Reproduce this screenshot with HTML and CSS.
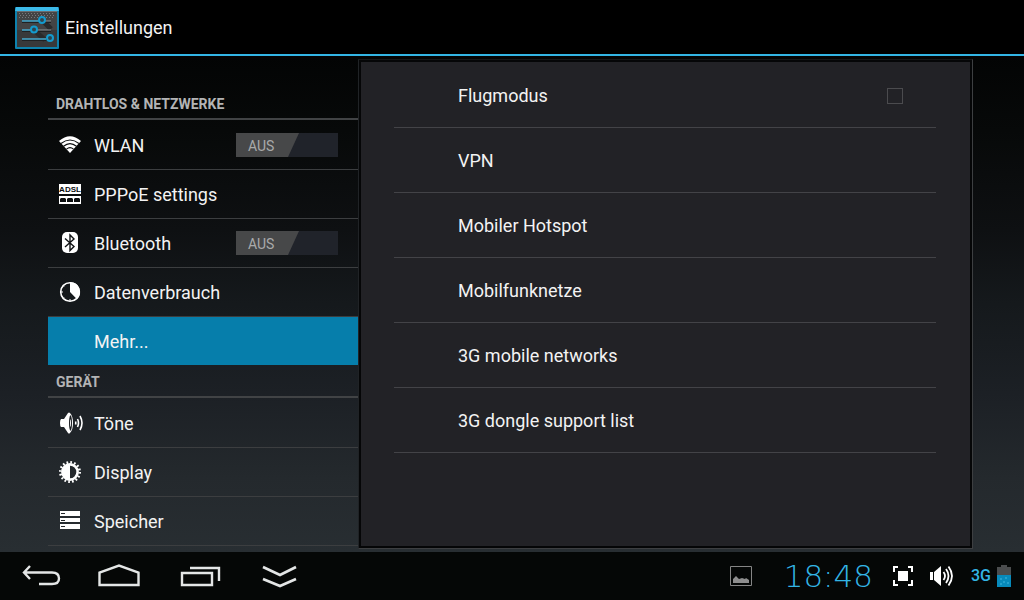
FILE: index.html
```html
<!DOCTYPE html>
<html lang="de">
<head>
<meta charset="utf-8">
<meta name="viewport" content="width=device-width, initial-scale=1">
<title>Einstellungen</title>
<link rel="stylesheet" href="styles.css">
</head>
<body>
<header class="app-bar">
  <svg class="app-icon" viewBox="0 0 44 42" aria-hidden="true">
    <rect width="44" height="42" rx="1" fill="#0d82ae"/>
    <path d="M1 0h42l1 4H0z" fill="#3cb9e8"/>
    <path d="M2 4h40v36H2z" fill="#434445"/>
    <path d="M2 23h40v17H2z" fill="#38393a"/>
    <path d="M2 4h40v1H2z" fill="#6c6e70"/>
    <path d="M4 6.500h36M5 8.500h35M4 10.500h36" stroke="#77797b" stroke-dasharray="1 2"/>
    <path d="M28 14l8 8M20 24l10 9" stroke="#292a2b" stroke-width="5"/>
    <path d="M7 15h29M7 24h29M7 33h25" stroke="#202122" stroke-width="2"/>
    <path d="M7 14h17M7 23h9M7 32h24" stroke="#45a9ce" stroke-width="1.5"/>
    <path d="M30 14h6M22 23h14" stroke="#8e9699"/>
    <g fill="#31444c" stroke="#149bce" stroke-width="2"><circle cx="27" cy="13" r="3"/><circle cx="19" cy="22.500" r="3"/><circle cx="35" cy="31" r="3"/></g>
  </svg>
  <h1 class="app-title">Einstellungen</h1>
</header>

<main class="content">
  <nav class="sidebar" aria-label="Kategorien">
    <h2 class="section-title">Drahtlos &amp; Netzwerke</h2>
    <ul class="menu">
      <li class="menu-row">
        <a class="menu-link" href="#wlan">
          <svg class="icon" viewBox="0 0 26 26" aria-hidden="true"><path d="M1 8Q12 -1.500 23 8L12 20z" fill="#fff"/><path d="M3 10.500Q12 3.500 21 10.500M5.500 13.300Q12 8 18.500 13.300M8.500 16.200Q12 13 15.500 16.200" fill="none" stroke="#0c0e0f" stroke-width="1.100"/></svg>
          <span id="wlan-label">WLAN</span>
        </a>
        <label class="switch"><input type="checkbox" role="switch" aria-labelledby="wlan-label"><span class="switch-thumb">AUS</span></label>
      </li>
      <li class="menu-row">
        <a class="menu-link" href="#pppoe">
          <svg class="icon" viewBox="0 0 26 26" aria-hidden="true"><path d="M1 2h22v20H1z" fill="#fff"/><text class="adsl" x="12" y="10" text-anchor="middle">ADSL</text><path d="M1 12h22v2H1zM2 20v-3l1-1h4l1 1v3zM9 20v-3l1-1h4l1 1v3zM16 20v-3l1-1h4l1 1v3z" fill="#0c0e0f"/></svg>
          <span>PPPoE settings</span>
        </a>
      </li>
      <li class="menu-row">
        <a class="menu-link" href="#bluetooth">
          <svg class="icon" viewBox="0 0 26 26" aria-hidden="true"><rect x="4" y="1" width="16" height="21" rx="5" fill="#fff"/><path d="M7 7.500l9 8-4 4V4l4 4-9 8" fill="none" stroke="#111315" stroke-width="1.400"/></svg>
          <span id="bt-label">Bluetooth</span>
        </a>
        <label class="switch"><input type="checkbox" role="switch" aria-labelledby="bt-label"><span class="switch-thumb">AUS</span></label>
      </li>
      <li class="menu-row">
        <a class="menu-link" href="#daten">
          <svg class="icon" viewBox="0 0 26 26" aria-hidden="true"><circle cx="12" cy="12" r="9.300" fill="none" stroke="#fff" stroke-width="1.600"/><path d="M12 2a10 10 0 0 1 7 17.200L12 12z" fill="#fff"/><path d="M3 12h2M12 19v2M5 5.500l1 1M5 18.500l1-1" stroke="#fff"/></svg>
          <span>Datenverbrauch</span>
        </a>
      </li>
      <li class="menu-row menu-row-active">
        <a class="menu-link" href="#mehr" aria-current="page"><span class="icon"></span><span>Mehr...</span></a>
      </li>
    </ul>
    <h2 class="section-title">Gerät</h2>
    <ul class="menu">
      <li class="menu-row">
        <a class="menu-link" href="#toene">
          <svg class="icon" viewBox="0 0 26 26" aria-hidden="true"><path d="M3 8h3l4-6q1-1 2 0 3 3 3 10t-3 10q-1 1-2 0l-4-6H3q-1-1-1-4t1-4z" fill="#fff"/><path d="M12.500 4q1.500 2 1.500 8t-1.500 8q-1.500-2-1.500-8t1.500-8z" fill="#1b1e22"/><path d="M12 8q1 1 1 4t-1 4z" fill="#fff"/><path d="M17.500 10.500q.6 1.500 0 3M19.500 8q2 4 0 8M22 5q4 7 0 14" fill="none" stroke="#fff" stroke-width="1.600"/></svg>
          <span>Töne</span>
        </a>
      </li>
      <li class="menu-row">
        <a class="menu-link" href="#display">
          <svg class="icon" viewBox="0 0 26 26" aria-hidden="true"><circle cx="12" cy="12" r="9.700" fill="none" stroke="#fff" stroke-width="2.600" stroke-dasharray="1.700 2.110"/><circle cx="12" cy="12" r="7.600" fill="none" stroke="#fff" stroke-width="2.600"/><path d="M12 4a8 8 0 0 0 0 16z" fill="#fff"/></svg>
          <span>Display</span>
        </a>
      </li>
      <li class="menu-row">
        <a class="menu-link" href="#speicher">
          <svg class="icon" viewBox="0 0 26 26" aria-hidden="true"><path d="M2 2h20v5H2zM2 9h20v4H2zM2 15h20v5H2z" fill="#fff"/><path d="M3 4.500h4M3 11.500h4M3 17.500h4" stroke="#24282c"/></svg>
          <span>Speicher</span>
        </a>
      </li>
    </ul>
  </nav>

  <section class="panel" aria-label="Mehr">
    <ul class="options">
      <li class="option"><label for="flugmodus">Flugmodus</label><input class="tick" type="checkbox" id="flugmodus"></li>
      <li class="option"><a href="#vpn">VPN</a></li>
      <li class="option"><a href="#hotspot">Mobiler Hotspot</a></li>
      <li class="option"><a href="#mobilfunk">Mobilfunknetze</a></li>
      <li class="option"><a href="#3g">3G mobile networks</a></li>
      <li class="option"><a href="#dongle">3G dongle support list</a></li>
    </ul>
  </section>
</main>

<footer class="system-bar">
  <div class="keys">
    <button class="key" type="button" aria-label="Zurück"><svg viewBox="0 0 80 48"><path d="M30 14l-6 6.500 6 6.500M24 20.500h28q7 0 7 6 0 5.500-7 5.500H39" fill="none" stroke="#e4e6e6" stroke-width="2.400"/></svg></button>
    <button class="key" type="button" aria-label="Startseite"><svg viewBox="0 0 80 48"><path d="M19.500 33V20.500l19.500-7 19.500 7V33z" fill="none" stroke="#e4e6e6" stroke-width="2.400"/></svg></button>
    <button class="key" type="button" aria-label="Letzte Apps"><svg viewBox="0 0 80 48"><path d="M22 21h30v12H22zM30 16h29v13" fill="none" stroke="#e4e6e6" stroke-width="2.400"/></svg></button>
    <button class="key" type="button" aria-label="Leiste ausblenden"><svg viewBox="0 0 80 48"><path d="M23 15l17 8 16-8M23 27l17 7 16-7" fill="none" stroke="#e4e6e6" stroke-width="2.700"/></svg></button>
  </div>
  <div class="status">
    <svg class="status-picture" viewBox="0 0 22 20" aria-hidden="true"><path d="M.5.5h21v19H.5z" fill="none" stroke="#858585"/><path d="M3 17v-4l3-3 3 3 3-1 3 1 1-1 3 2v3z" fill="#8e8e8e"/></svg>
    <time class="clock">18:48</time>
    <button class="status-button" type="button" aria-label="Bildschirmfoto"><svg width="20" height="20" viewBox="0 0 20 20"><path d="M5 5h10v10H5z" fill="#fff"/><path d="M1 6V1h4M15 1h4v5M19 14v5h-4M5 19H1v-5" fill="none" stroke="#fff" stroke-width="2"/></svg></button>
    <button class="status-button" type="button" aria-label="Lautstärke"><svg width="24" height="22" viewBox="0 0 24 22"><path d="M0 7h3v8H0zM4 7l7-6v20l-7-6z" fill="#fff"/><path d="M13.500 7q3 4 0 8M16 4q5 7 0 14M18.500 1.500q7 9.500 0 19" fill="none" stroke="#fff" stroke-width="1.800"/></svg></button>
    <span class="network">3G</span>
    <svg class="status-battery" viewBox="0 0 14 22" aria-label="Akku"><path d="M4 0h6v2h4v20H0V2h4z" fill="#4b4d4e"/><path d="M0 10h14v12H0z" fill="#078abb"/><path d="M3 14h2M8 13h2M6 17h2M10 18h2M3 19h2" stroke="#42b8df"/></svg>
  </div>
</footer>
</body>
</html>
```

FILE: styles.css
```css
* { box-sizing: border-box; }

body {
  margin: 0;
  min-height: 100vh;
  display: flex;
  flex-direction: column;
  background: #000;
  color: #f3f3f3;
  font-family: Roboto, sans-serif;
  font-size: 18px;
  line-height: 24px;
}

a { color: inherit; text-decoration: none; }
ul { margin: 0; padding: 0; list-style: none; }
button { margin: 0; padding: 0; border: 0; background: none; }
svg { display: block; }

.app-bar {
  display: flex;
  align-items: center;
  gap: 6px;
  height: 56px;
  padding: 2px 0 0 15px;
  border-bottom: 2px solid #33b5e5;
}
.app-icon { width: 44px; height: 42px; }
.app-title { margin: 0; font-size: 18px; font-weight: 400; }

.content {
  flex: 1;
  display: grid;
  grid-template-columns: 310fr 615fr;
  padding: 0 51px 0 48px;
  background: linear-gradient(#030404 0%, #070909 15%, #0e1012 35%, #15191c 50%, #1c2025 68%, #24292d 85%, #282e32 100%);
}

.sidebar { padding: 32px 0 6px; }
.section-title {
  margin: 0;
  height: 32px;
  padding: 4px 8px 0;
  border-bottom: 2px solid #414345;
  color: #b3b4b5;
  font-size: 14px;
  font-weight: 700;
  text-transform: uppercase;
}
.menu { padding-top: 1px; }
.menu-row {
  display: flex;
  align-items: center;
  height: 49px;
  padding-right: 20px;
  border-bottom: 1px solid #3c3e40;
}
.menu-row-active {
  border-color: transparent;
  background: #067eab;
  background-clip: padding-box;
}
.menu-link {
  flex: 1;
  display: flex;
  align-items: center;
  gap: 10px;
  padding: 2px 0 0 10px;
}
.icon { width: 26px; height: 26px; }
.adsl { font: 700 8px "Liberation Sans", sans-serif; fill: #0c0e0f; }

.switch {
  width: 102px;
  height: 24px;
  background: #20232a;
}
.switch input {
  position: absolute;
  appearance: none;
  margin: 0;
}
.switch-thumb {
  display: block;
  width: 63px;
  height: 24px;
  padding: 1px 12px 0;
  background: #474849;
  clip-path: polygon(0 0, 100% 0, 52px 100%, 0 100%);
  color: #a9aaab;
  font-size: 14px;
}

.panel {
  margin: 3px 0;
  padding: 3px 36px 3px 35px;
  border: 1px solid #3d3f41;
  border-top-color: #15171a;
  border-left-color: #202326;
  outline: 2px solid #050607;
  outline-offset: -3px;
  background: #222226;
}
.option {
  display: flex;
  align-items: center;
  justify-content: space-between;
  height: 65px;
  padding: 2px 33px 0 64px;
  border-bottom: 1px solid #434347;
}
.tick {
  appearance: none;
  width: 16px;
  height: 16px;
  margin: 0;
  border: 1px solid #4b4b4e;
}

.system-bar {
  display: flex;
  justify-content: space-between;
  height: 48px;
  padding-right: 13px;
  background: #050706;
}
.keys { display: flex; }
.key, .key svg { width: 80px; height: 48px; }
.status { display: flex; align-items: center; color: #33b5e5; }
.status-picture { width: 22px; height: 20px; margin-right: 32px; }
.clock {
  margin-right: 20px;
  font-family: "DejaVu Sans Light", "DejaVu Sans", sans-serif;
  font-size: 31px;
  font-weight: 200;
}
.status-button { margin-right: 17px; }
.network { margin-right: 6px; font-size: 16px; font-weight: 500; }
.status-battery { width: 14px; height: 22px; }
```
